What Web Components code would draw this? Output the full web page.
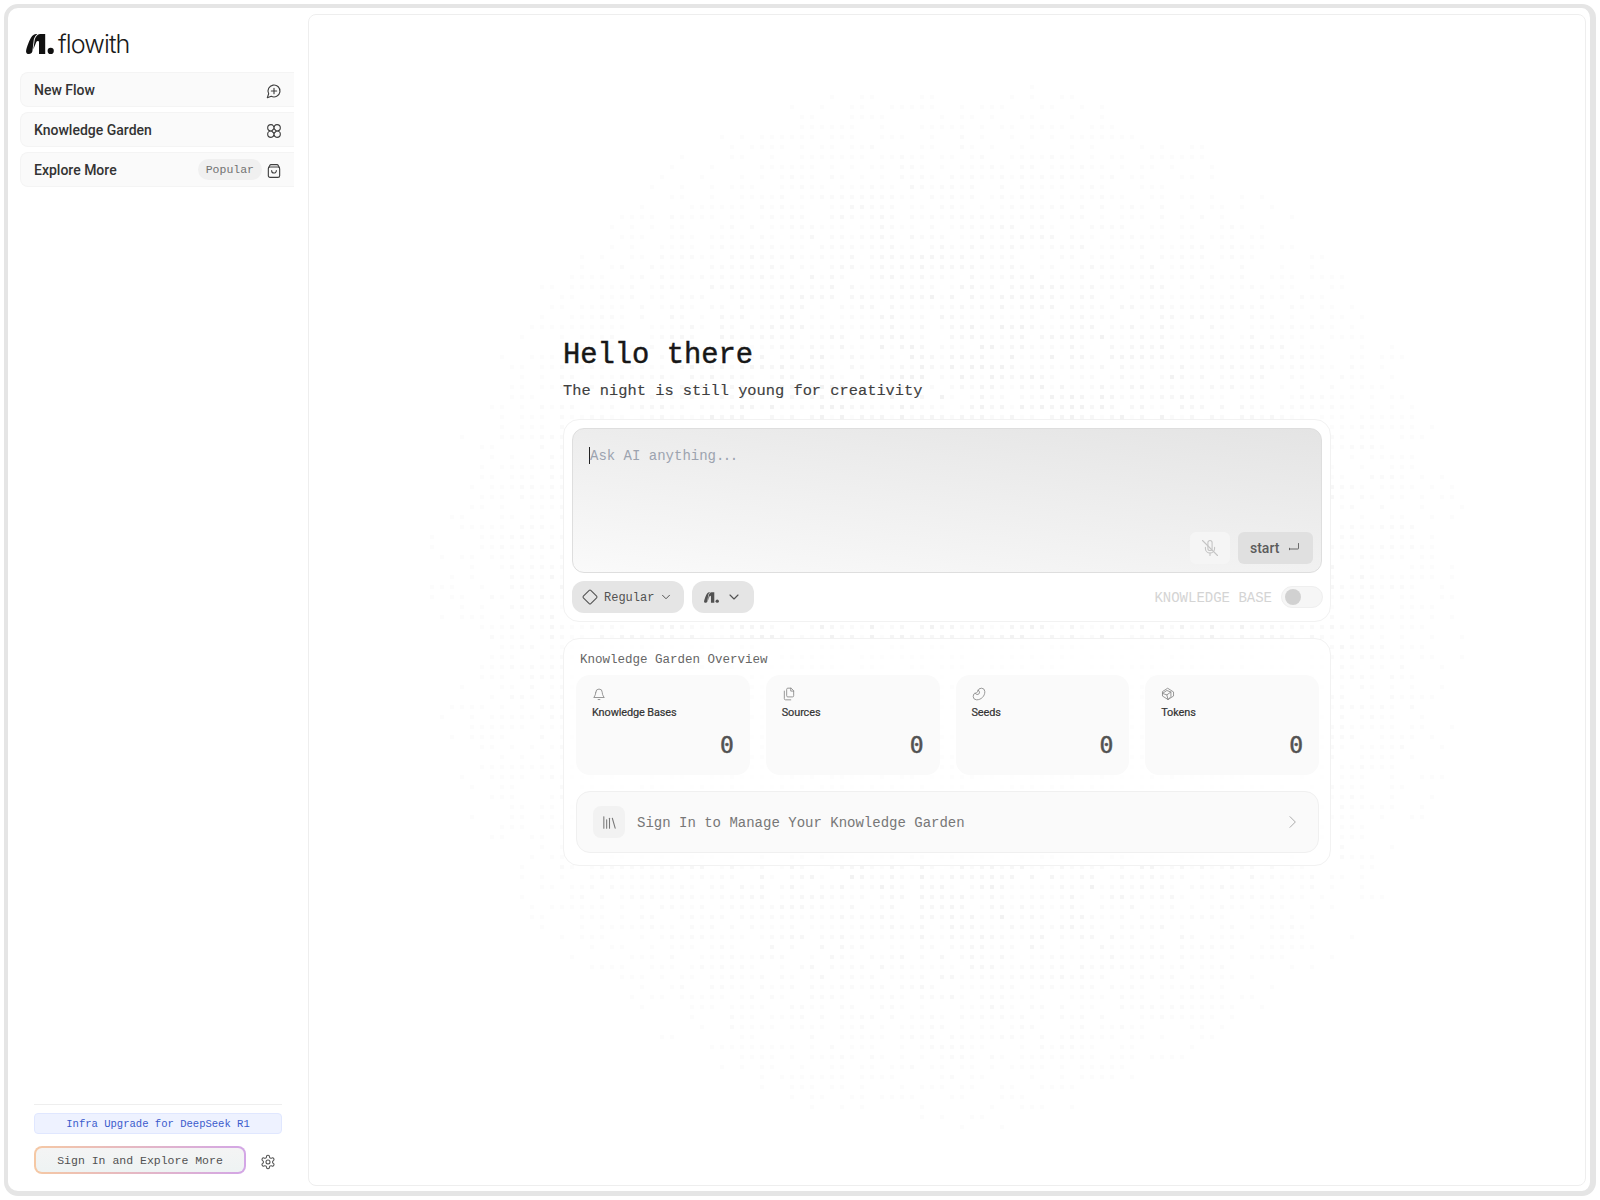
<!DOCTYPE html>
<html lang="en">
<head>
<meta charset="utf-8">
<title>flowith</title>
<style>
html,body{margin:0;padding:0;background:#fff;}
body{font-family:"Liberation Mono",monospace;color:#262626;}
</style>
</head>
<body>
<x-app>
  <x-sidebar slot="sidebar">
    <x-logo slot="logo"></x-logo>
    <x-nav-item icon="chat-plus">New Flow</x-nav-item>
    <x-nav-item icon="flower">Knowledge Garden</x-nav-item>
    <x-nav-item icon="bag" badge="Popular">Explore More</x-nav-item>
  </x-sidebar>
  <x-main slot="main">
    <x-hero title-text="Hello there" sub="The night is still young for creativity"></x-hero>
    <x-composer></x-composer>
    <x-overview>
      <x-stat-card icon="bell" label="Knowledge Bases" value="0"></x-stat-card>
      <x-stat-card icon="files" label="Sources" value="0"></x-stat-card>
      <x-stat-card icon="bean" label="Seeds" value="0"></x-stat-card>
      <x-stat-card icon="box" label="Tokens" value="0"></x-stat-card>
    </x-overview>
  </x-main>
</x-app>
<script>
const ICONS={
 'chat-plus':'<path d="M7.9 20A9 9 0 1 0 4 16.1L2 22Z"/><path d="M8 12h8M12 8v8"/>',
 'flower':'<path d="M12 8.5C12 5 10.5 2.5 7.5 2.5S2.5 5 2.5 7.5 5 12 8.5 12C5 12 2.5 13.5 2.5 16.5S5 21.5 7.5 21.5 12 19 12 15.5C12 19 13.5 21.5 16.5 21.5S21.5 19 21.5 16.5 19 12 15.5 12C19 12 21.5 10.5 21.5 7.5S19 2.5 16.5 2.5 12 5 12 8.5Z"/><path d="M12 8.5 15.5 12 12 15.5 8.5 12Z"/>',
 'bag':'<rect x="3.5" y="6" width="17" height="15.5" rx="2.5"/><path d="M3.8 7 6 3.2a1.5 1.5 0 0 1 1.3-.7h9.4a1.5 1.5 0 0 1 1.3.7L20.2 7"/><path d="M8.5 11.5a3.5 3.5 0 0 0 7 0"/>',
 'gear':'<path d="M12.22 2h-.44a2 2 0 0 0-2 2v.18a2 2 0 0 1-1 1.73l-.43.25a2 2 0 0 1-2 0l-.15-.08a2 2 0 0 0-2.73.73l-.22.38a2 2 0 0 0 .73 2.73l.15.1a2 2 0 0 1 1 1.72v.51a2 2 0 0 1-1 1.74l-.15.09a2 2 0 0 0-.73 2.73l.22.38a2 2 0 0 0 2.73.73l.15-.08a2 2 0 0 1 2 0l.43.25a2 2 0 0 1 1 1.73V20a2 2 0 0 0 2 2h.44a2 2 0 0 0 2-2v-.18a2 2 0 0 1 1-1.73l.43-.25a2 2 0 0 1 2 0l.15.08a2 2 0 0 0 2.73-.73l.22-.39a2 2 0 0 0-.73-2.73l-.15-.08a2 2 0 0 1-1-1.74v-.5a2 2 0 0 1 1-1.74l.15-.09a2 2 0 0 0 .73-2.73l-.22-.38a2 2 0 0 0-2.73-.73l-.15.08a2 2 0 0 1-2 0l-.43-.25a2 2 0 0 1-1-1.73V4a2 2 0 0 0-2-2z"/><circle cx="12" cy="12" r="3"/>',
 'mic-off':'<path d="M12 3a2.5 2.5 0 0 0-2.5 2.5v7a2.5 2.5 0 0 0 5 0v-7A2.5 2.5 0 0 0 12 3Z"/><path d="M17.5 11v1.5a5.5 5.5 0 0 1-11 0V11"/><path d="M12 18v3"/><path d="M3 3l18 18"/>',
 'return':'<path d="M21 3v10a1 1 0 0 1-1 1H3"/><path d="M3 12.5v3"/>',
 'diamond':'<rect x="5" y="5" width="14" height="14" rx="1.5" transform="rotate(45 12 12)"/>',
 'chevron-down':'<path d="m6 9 6 6 6-6"/>',
 'chevron-right':'<path d="m9 4 8 8-8 8"/>',
 'bell':'<path d="M6.5 9a5.5 5.5 0 0 1 11 0c0 5 3.5 9 3.5 9H3s3.5-4 3.5-9"/><path d="M10.5 21.5h3"/>',
 'files':'<path d="M15 2H10a2 2 0 0 0-2 2v11a2 2 0 0 0 2 2h8a2 2 0 0 0 2-2V7z"/><path d="M15 2v5h5"/><path d="M4 7v13a2 2 0 0 0 2 2h9"/>',
 'bean':'<path d="M10.165 6.598C9.954 7.478 9.64 8.36 9 9c-.64.64-1.521.954-2.402 1.165A6 6 0 0 0 8 22c7.732 0 14-6.268 14-14a6 6 0 0 0-11.835-1.402Z"/><path d="M5.341 10.62a4 4 0 1 0 5.279-5.28"/>',
 'box':'<path d="M12 2.5 21.5 8.5v7L12 21.5 2.5 15.5v-7Z"/><path d="M2.5 11 10 6l7 2.5v8L12 21.5"/><path d="M17 8.5 10 13.5 2.5 11M10 13.5 12 21.5"/>',
 'library':'<path d="m16 6 4 14"/><path d="M12 6v14"/><path d="M8 8v12"/><path d="M4 4v16"/>'
};
const LOGO='<path d="M.1 16.8C.6 13.2 3.6 5.2 5.8 2.4 7 .9 8.4 0 10.2 0h1.2C9.4 1.5 8.5 3.5 7.8 5.5L6.4 17.2C6 19 4.7 20 3 20 1 20-.2 18.8.1 16.8Z"/><path d="M8.7 5.8C9.7 2.5 11.5 0 14 0h5.2v20h-6.2V8C13 6.5 10.8 6.5 10.3 8L7.3 15.5Z"/><circle cx="24.7" cy="16.9" r="3.1"/>';

function tpl(css,html){const t=document.createElement('template');t.innerHTML='<style>'+css+'</style>'+html;return t;}
function define(name,template,init){
  customElements.define(name,class extends HTMLElement{
    constructor(){super();this.attachShadow({mode:'open'}).appendChild(template.content.cloneNode(true));}
    connectedCallback(){if(init)init(this,this.shadowRoot);}
  });
}

customElements.define('x-icon',class extends HTMLElement{
  static get observedAttributes(){return ['name','size','stroke-w'];}
  constructor(){super();this.attachShadow({mode:'open'});}
  attributeChangedCallback(){this.render();}
  connectedCallback(){this.render();}
  render(){
    const s=this.getAttribute('size')||16,w=this.getAttribute('stroke-w')||2,n=this.getAttribute('name');
    this.shadowRoot.innerHTML='<style>:host{display:inline-flex;flex:none;line-height:0}</style><svg xmlns="http://www.w3.org/2000/svg" width="'+s+'" height="'+s+'" viewBox="0 0 24 24" fill="none" stroke="currentColor" stroke-width="'+w+'" stroke-linecap="round" stroke-linejoin="round">'+(ICONS[n]||'')+'</svg>';
  }
});

define('x-app',tpl(`
:host{display:flex;box-sizing:border-box;margin:4px;width:1592px;height:1192px;border:solid #e5e5e5;border-width:4px 6px 5px 4px;border-radius:14px;background:#fff;overflow:hidden}
`,`<slot name="sidebar"></slot><slot name="main"></slot>`));

define('x-logo',tpl(`
:host{display:flex;align-items:center;gap:4px;height:22px;color:#111}
svg{display:block;flex:none}
span{font:300 25.2px/22px Inter,sans-serif;letter-spacing:-.9px;color:#1a1a1a;margin-top:-1px}
`,`<svg width="28" height="20" viewBox="0 0 28 20" fill="currentColor">${LOGO}</svg><span>flowith</span>`));

define('x-nav-item',tpl(`
:host{display:flex;align-items:center;box-sizing:border-box;height:35px;padding:0 12px 0 13px;background:#fafafa;border:1px solid #f4f4f4;border-right:0;border-radius:8px 0 0 8px;font:500 14px Roboto,sans-serif;color:#333}
.t{flex:1}
.b{display:none;height:21px;box-sizing:border-box;padding:0 8px;border-radius:11px;background:#f0f0f0;font:11.5px/21px "Liberation Mono",monospace;color:#737373;margin-right:4px}
x-icon{color:#404040;margin-top:2px}
`,`<span class="t"><slot></slot></span><span class="b"></span><x-icon size="16" stroke-w="1.7"></x-icon>`),(el,r)=>{
  r.querySelector('x-icon').setAttribute('name',el.getAttribute('icon'));
  const b=el.getAttribute('badge');
  if(b){const s=r.querySelector('.b');s.textContent=b;s.style.display='block';}
});

define('x-sidebar',tpl(`
:host{display:flex;flex-direction:column;box-sizing:border-box;width:300px;height:100%;padding:25px 0 17px 12px;flex:none}
.logo{padding:0 0 0 6px;height:39px}
nav{display:flex;flex-direction:column;gap:5px;width:274px}
footer{margin-top:auto;width:248px;margin-left:14px;border-top:1px solid #eee;padding-top:8px;display:flex;flex-direction:column;gap:12px}
.promo{box-sizing:border-box;height:21px;border:1px solid #e0e7ff;border-radius:4px;background:#eef2ff;color:#3b5bcc;font:10.55px/20px "Liberation Mono",monospace;text-align:center}
.row{display:flex;align-items:center}
.btn{box-sizing:border-box;width:212px;height:28px;border-radius:8px;border:2px solid transparent;background:linear-gradient(180deg,#f4f4f4,#eef3f3) padding-box,linear-gradient(90deg,#f5c8a4,#d3a6e6) border-box;font:11.5px/25px "Liberation Mono",monospace;color:#525252;text-align:center}
x-icon{color:#525252;margin:3px 0 0 14px}
`,`<div class="logo"><slot name="logo"></slot></div><nav><slot></slot></nav>
<footer><div class="promo">Infra Upgrade for DeepSeek R1</div><div class="row"><div class="btn">Sign In and Explore More</div><x-icon name="gear" size="16" stroke-w="1.6"></x-icon></div></footer>`));

define('x-dots',tpl(`
:host{position:absolute;inset:0;display:block;pointer-events:none}
svg{position:absolute;left:0;top:0}
`,`<svg></svg>`),(el,r)=>{
  // halftone dots: 10px pitch, radial envelope around the centre of the panel
  const W=1278,H=1172,cx=639,cy=586;
  let seed=20250211;const rnd=()=>{seed=(seed*1664525+1013904223)>>>0;return seed/4294967296;};
  const buckets=[[],[],[],[],[]];
  for(let y=0;y<H;y+=10){for(let x=1;x<W;x+=10){
    const d=Math.hypot(x-cx,y-cy)/570;
    if(d>=1)continue;
    let env=d<.4?1:(1-d)/.6;
    env=Math.pow(env,1.35);
    const v=rnd()*rnd()**.3*env*1.3;
    if(v<.07)continue;
    const i=Math.min(4,Math.floor(v*5));
    buckets[i].push('M'+x+' '+y+'h4v4h-4z');
  }}
  const ops=[.012,.02,.03,.04,.05];
  const s=r.querySelector('svg');s.setAttribute('width',W);s.setAttribute('height',H);s.setAttribute('viewBox','0 0 '+W+' '+H);
  s.innerHTML=buckets.map((b,i)=>'<path fill="#000" fill-opacity="'+ops[i]+'" d="'+b.join('')+'"/>').join('');
});

define('x-main',tpl(`
:host{position:relative;display:flex;box-sizing:border-box;flex:none;width:1278px;height:1172px;margin-top:6px;border:1px solid #eee;border-radius:8px;background:#fff;overflow:hidden;flex-direction:column;align-items:flex-start;padding:318px 0 0 254px}
.col{position:relative;width:768px;display:flex;flex-direction:column;gap:16px}
`,`<x-dots></x-dots><div class="col"><slot></slot></div>`));

define('x-hero',tpl(`
:host{display:block;height:68px;margin-bottom:2px;font-family:"Liberation Mono",monospace}
h1{margin:0;padding-top:5px;font-size:28.8px;line-height:36px;font-weight:400;color:#171717;-webkit-text-stroke:.45px #171717}
p{margin:6px 0 0;font-size:15.36px;line-height:22px;color:#404040;-webkit-text-stroke:.15px #404040}
`,`<h1></h1><p></p>`),(el,r)=>{r.querySelector('h1').textContent=el.getAttribute('title-text');r.querySelector('p').textContent=el.getAttribute('sub');});

define('x-composer',tpl(`
:host{display:block;box-sizing:border-box;height:203px;padding:8px;border:1px solid #f2f2f2;border-radius:16px;background:rgba(255,255,255,.94);font-family:"Liberation Mono",monospace}
.box{position:relative;box-sizing:border-box;height:145px;border:1px solid #dedede;border-radius:12px;background:linear-gradient(187deg,#e4e4e4 0%,#fafafa 100%)}
.ph{padding:18px 0 0 16px;height:60px;box-sizing:border-box;font-size:14px;line-height:18px;color:#9ca3af;display:flex}
.ph b{font-weight:400;letter-spacing:-1.6px}
.caret{width:1px;height:17px;background:#222;flex:none}
.acts{position:absolute;right:8px;bottom:8px;display:flex;gap:8px}
.mic{width:40px;height:32px;border-radius:6px;background:#f5f5f5;color:#c4c4c4;display:flex;align-items:center;justify-content:center}
.start{width:75px;height:32px;box-sizing:border-box;border-radius:6px;background:#e0e0e0;color:#5c5c5c;display:flex;align-items:center;justify-content:space-between;padding:0 13px 0 12px;font:500 14px Roboto,sans-serif}
.start span{padding-bottom:1px}
.row{display:flex;align-items:center;margin-top:8px;height:32px}
.pill{display:flex;align-items:center;height:32px;box-sizing:border-box;border-radius:12px;background:#e5e5e5;color:#525252;font-size:12px}
.p1{width:112px;padding-left:9px}
.p1 span{margin:1px 0 0 5px;flex:none}
.p1 .c{margin-left:5px}
.p2{width:62px;margin-left:8px;padding-left:12px}
.p2 svg{display:block;flex:none}
.p2 .c{margin-left:7px}
.kb{margin:1px 0 0 auto;font-size:14px;color:#d4d4d4}
.tg{box-sizing:border-box;width:42px;height:22px;margin:0 -1px 0 9px;border:1px solid #efefef;border-radius:11px;background:#f6f6f6;padding:2px 3px}
.tg i{display:block;width:16px;height:16px;border-radius:50%;background:#d1d1d1}
`,`<div class="box"><div class="ph"><span class="caret"></span><span>Ask AI anything<b>...</b></span></div>
<div class="acts"><div class="mic"><x-icon name="mic-off" size="20" stroke-w="1.3"></x-icon></div><div class="start"><span>start</span><x-icon name="return" size="12" stroke-w="1.8"></x-icon></div></div></div>
<div class="row"><div class="pill p1"><x-icon name="diamond" size="18" stroke-w="1.4"></x-icon><span>Regular</span><x-icon class="c" name="chevron-down" size="14" stroke-w="1.7"></x-icon></div>
<div class="pill p2"><svg width="15" height="11" viewBox="0 0 28 20" fill="currentColor">${LOGO}</svg><x-icon class="c" name="chevron-down" size="16" stroke-w="1.7"></x-icon></div>
<div class="kb">KNOWLEDGE BASE</div><div class="tg"><i></i></div></div>`));

define('x-stat-card',tpl(`
:host{display:flex;flex-direction:column;box-sizing:border-box;height:100px;padding:12px 16px 0 16px;border-radius:14px;background:#fafafa;position:relative}
x-icon{color:#8a8a8a}
.l{font:400 10.9px/14px Roboto,sans-serif;color:#333;margin-top:5px;letter-spacing:-.1px;-webkit-text-stroke:.2px #333}
.v{margin-top:auto;margin-bottom:17px;text-align:right;font:23px/26px "DejaVu Sans Mono",monospace;color:#525252;-webkit-text-stroke:.5px #525252}
`,`<x-icon size="14" stroke-w="1.5"></x-icon><div class="l"></div><div class="v"></div>`),(el,r)=>{
  r.querySelector('x-icon').setAttribute('name',el.getAttribute('icon'));
  r.querySelector('.l').textContent=el.getAttribute('label');
  r.querySelector('.v').textContent=el.getAttribute('value');
});

define('x-overview',tpl(`
:host{display:block;box-sizing:border-box;height:228px;padding:0 12px;border:1px solid #f2f2f2;border-radius:16px;background:rgba(255,255,255,.8);font-family:"Liberation Mono",monospace}
.h{padding:12px 0 0 4px;height:36px;box-sizing:border-box;font-size:12.5px;line-height:18px;color:#666}
.grid{display:grid;grid-template-columns:repeat(4,1fr);gap:16px;margin-right:-1px}
.m{display:flex;align-items:center;box-sizing:border-box;height:62px;margin:16px -1px 0 0;padding:0 18px 0 16px;border:1px solid #f0f0f0;border-radius:14px;background:#fafafa;font-size:14px;color:#777}
.i{width:32px;height:32px;border-radius:8px;background:#f2f2f2;color:#777;display:flex;align-items:center;justify-content:center;margin-right:12px}
.t{flex:1;padding-top:1px}
.m x-icon.c{color:#aaa}
`,`<div class="h">Knowledge Garden Overview</div><div class="grid"><slot></slot></div>
<div class="m"><div class="i"><x-icon name="library" size="17" stroke-w="1.5"></x-icon></div><span class="t">Sign In to Manage Your Knowledge Garden</span><x-icon class="c" name="chevron-right" size="16" stroke-w="1.5"></x-icon></div>`));
</script>
</body>
</html>
